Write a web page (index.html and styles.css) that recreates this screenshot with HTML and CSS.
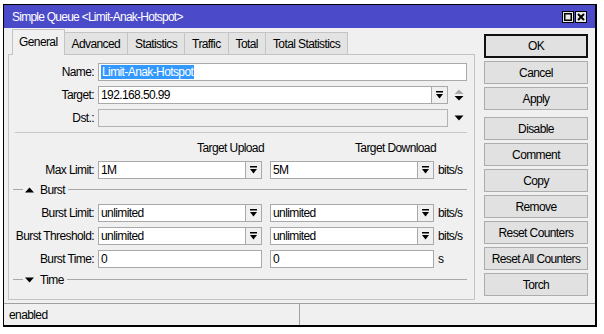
FILE: index.html
```html
<!DOCTYPE html>
<html>
<head>
<meta charset="utf-8">
<link rel="stylesheet" href="styles.css">
</head>
<body>
<div class="window">
  <div class="titlebar">
    <span class="title">Simple Queue &lt;Limit-Anak-Hotspot&gt;</span>
    <div class="tb-btns">
      <span class="tb-btn"><svg width="8" height="8" viewBox="0 0 8 8"><rect x="0.75" y="0.75" width="6.5" height="6.5" fill="none" stroke="#000" stroke-width="1.5"/></svg></span>
      <span class="tb-btn"><svg width="8" height="8" viewBox="0 0 8 8"><path d="M1 1L7 7M7 1L1 7" stroke="#000" stroke-width="2"/></svg></span>
    </div>
  </div>
  <div class="body">
    <div class="main">
      <div class="left">
        <div class="tabs">
          <span class="tab active">General</span>
          <span class="tab">Advanced</span>
          <span class="tab">Statistics</span>
          <span class="tab">Traffic</span>
          <span class="tab">Total</span>
          <span class="tab">Total Statistics</span>
        </div>
        <div class="panel">
          <div class="row">
            <span class="lbl">Name:</span>
            <span class="inp w-name"><span class="sel">Limit-Anak-Hotspot</span></span>
          </div>
          <div class="row">
            <span class="lbl">Target:</span>
            <span class="inp w-target">192.168.50.99</span>
            <span class="dd"><svg width="7" height="8" viewBox="0 0 7 8"><rect x="0" y="0" width="7" height="1.5" fill="#000"/><path d="M0 3H7L3.5 7.5Z" fill="#000"/></svg></span>
            <span class="spin"><svg width="10" height="12" viewBox="0 0 10 12"><path d="M0.5 5L5 0.5L9.5 5Z" fill="#a8a8a8"/><path d="M0.5 7H9.5L5 11.5Z" fill="#000"/></svg></span>
          </div>
          <div class="row">
            <span class="lbl">Dst.:</span>
            <span class="inp disabled w-dst"></span>
            <span class="spin"><svg width="10" height="6" viewBox="0 0 10 6"><path d="M0.5 0.5H9.5L5 5.5Z" fill="#000"/></svg></span>
          </div>
          <div class="sep"></div>
          <div class="hdr">
            <span class="hcol">Target Upload</span>
            <span class="hcol second">Target Download</span>
          </div>
          <div class="row">
            <span class="lbl">Max Limit:</span>
            <span class="inp w-half">1M</span>
            <span class="dd"><svg width="7" height="8" viewBox="0 0 7 8"><rect x="0" y="0" width="7" height="1.5" fill="#000"/><path d="M0 3H7L3.5 7.5Z" fill="#000"/></svg></span>
            <span class="inp w-half second">5M</span>
            <span class="dd"><svg width="7" height="8" viewBox="0 0 7 8"><rect x="0" y="0" width="7" height="1.5" fill="#000"/><path d="M0 3H7L3.5 7.5Z" fill="#000"/></svg></span>
            <span class="unit">bits/s</span>
          </div>
          <div class="group">
            <span class="gline short"></span>
            <svg class="gtri" width="9" height="6" viewBox="0 0 9 6"><path d="M0 5.5L4.5 0.5L9 5.5Z" fill="#000"/></svg>
            <span class="gtext">Burst</span>
            <span class="gline long"></span>
          </div>
          <div class="row first-burst">
            <span class="lbl">Burst Limit:</span>
            <span class="inp w-half">unlimited</span>
            <span class="dd"><svg width="7" height="8" viewBox="0 0 7 8"><rect x="0" y="0" width="7" height="1.5" fill="#000"/><path d="M0 3H7L3.5 7.5Z" fill="#000"/></svg></span>
            <span class="inp w-half second">unlimited</span>
            <span class="dd"><svg width="7" height="8" viewBox="0 0 7 8"><rect x="0" y="0" width="7" height="1.5" fill="#000"/><path d="M0 3H7L3.5 7.5Z" fill="#000"/></svg></span>
            <span class="unit">bits/s</span>
          </div>
          <div class="row">
            <span class="lbl">Burst Threshold:</span>
            <span class="inp w-half">unlimited</span>
            <span class="dd"><svg width="7" height="8" viewBox="0 0 7 8"><rect x="0" y="0" width="7" height="1.5" fill="#000"/><path d="M0 3H7L3.5 7.5Z" fill="#000"/></svg></span>
            <span class="inp w-half second">unlimited</span>
            <span class="dd"><svg width="7" height="8" viewBox="0 0 7 8"><rect x="0" y="0" width="7" height="1.5" fill="#000"/><path d="M0 3H7L3.5 7.5Z" fill="#000"/></svg></span>
            <span class="unit">bits/s</span>
          </div>
          <div class="row">
            <span class="lbl">Burst Time:</span>
            <span class="inp w-full">0</span>
            <span class="inp w-full second">0</span>
            <span class="unit">s</span>
          </div>
          <div class="group time">
            <span class="gline short"></span>
            <svg class="gtri" width="9" height="6" viewBox="0 0 9 6"><path d="M0 0.5H9L4.5 5.5Z" fill="#000"/></svg>
            <span class="gtext">Time</span>
            <span class="gline long"></span>
          </div>
        </div>
      </div>
      <div class="buttons">
        <span class="btn ok">OK</span>
        <span class="btn">Cancel</span>
        <span class="btn">Apply</span>
        <span class="btn gap">Disable</span>
        <span class="btn">Comment</span>
        <span class="btn">Copy</span>
        <span class="btn">Remove</span>
        <span class="btn">Reset Counters</span>
        <span class="btn">Reset All Counters</span>
        <span class="btn">Torch</span>
      </div>
    </div>
    <div class="status">
      <span class="cell first">enabled</span>
      <span class="cell"></span>
    </div>
  </div>
</div>
</body>
</html>
```
FILE: styles.css
```css
* { box-sizing: border-box; }
body {
  margin: 0;
  background: #fff;
  font-family: "Liberation Sans", Arial, sans-serif;
  font-size: 12px;
  letter-spacing: -0.6px;
  color: #000;
}
.window {
  margin: 4px 0 0 3px;
  width: 594px;
  height: 323px;
  border: 1px solid #000;
  border-right-width: 2px;
  border-bottom-width: 2px;
  background: #f0f0f0;
  display: flex;
  flex-direction: column;
}
.titlebar {
  height: 23px;
  background: #4b4bca;
  color: #fff;
  display: flex;
  align-items: center;
  justify-content: space-between;
  padding: 0 8px 0 8px;
  flex: none;
}
.title { letter-spacing: -0.75px; }
.tb-btns { display: flex; gap: 1px; }
.tb-btn {
  width: 12px;
  height: 12px;
  border: 1px solid #000;
  background: #e8e8e8;
  display: flex;
  align-items: center;
  justify-content: center;
}
.body { flex: 1; display: flex; flex-direction: column; }
.main { height: 275px; display: flex; flex: none; }
.left {
  margin-left: 4px;
  width: 467px;
  display: flex;
  flex-direction: column;
  padding-bottom: 3px;
}
.tabs {
  height: 26px;
  padding-left: 4px;
  display: flex;
  align-items: flex-end;
  flex: none;
}
.tab {
  height: 22px;
  padding: 0 7px;
  border: 1px solid #c4c4c4;
  border-bottom: none;
  background: #e3e3e3;
  display: flex;
  align-items: center;
  margin-left: -1px;
}
.tab.active {
  margin-left: 0;
  height: 26px;
  margin-bottom: -1px;
  background: #f0f0f0;
  position: relative;
  z-index: 1;
  padding: 0 6px 2px;
}
.panel {
  flex: 1;
  border: 1px solid #c4c4c4;
  padding-top: 8px;
}
.row {
  display: flex;
  align-items: center;
  height: 18px;
  margin-bottom: 5px;
}
.lbl {
  width: 85px;
  text-align: right;
  margin-right: 4px;
  white-space: nowrap;
}
.inp {
  height: 18px;
  background: #fff;
  border: 1px solid #a9a9a9;
  padding: 0 2px;
  line-height: 16px;
  white-space: nowrap;
  overflow: hidden;
}
.inp.disabled { background: #f0f0f0; border-color: #b4b4b4; }
.sel { background: #3399ff; color: #fff; padding: 0 1px; display: inline-block; line-height: 14px; }
.w-name { width: 369px; }
.w-target { width: 334px; }
.w-dst { width: 350px; }
.w-half { width: 148px; }
.w-full { width: 164px; }
.second { margin-left: 8px; }
.dd {
  width: 16px;
  height: 18px;
  border: 1px solid #a9a9a9;
  border-left: none;
  background: #f0f0f0;
  display: flex;
  align-items: center;
  justify-content: center;
}
.spin { margin-left: 6px; display: flex; align-items: center; }
.unit { margin-left: 4px; }
.sep {
  height: 1px;
  background: #c8c8c8;
  margin: 1px 0 0 6px;
  width: 452px;
}
.hdr {
  display: flex;
  height: 14px;
  margin: 8px 0 6px 89px;
  align-items: center;
}
.hcol { width: 166px; text-align: right; }
.hcol.second { margin-left: 6px; }
.group {
  display: flex;
  align-items: center;
  height: 13px;
  margin: -1px 7px 0 4px;
}
.group.time { margin-top: 0; }
.gline { height: 1px; background: #a8a8a8; }
.gline.short { width: 10px; }
.gline.long { flex: 1; margin-left: 3px; }
.gtri { margin-left: 2px; }
.gtext { margin-left: 6px; }
.first-burst { margin-top: 8px; }
.buttons {
  margin-left: 9px;
  width: 104px;
  padding-top: 6px;
  display: flex;
  flex-direction: column;
}
.btn {
  height: 23px;
  margin-bottom: 3px;
  border: 1px solid #adadad;
  background: #e1e1e1;
  display: flex;
  align-items: center;
  justify-content: center;
  white-space: nowrap;
}
.btn.ok { height: 24px; border: 2px solid #111; }
.btn.gap { margin-top: 4px; }
.status {
  flex: 1;
  display: flex;
  border-top: 1px solid #a0a0a0;
}
.cell {
  display: flex;
  align-items: center;
  padding-left: 5px;
  flex: 1;
}
.cell.first { flex: none; width: 296px; border-right: 1px solid #a0a0a0; }
```
